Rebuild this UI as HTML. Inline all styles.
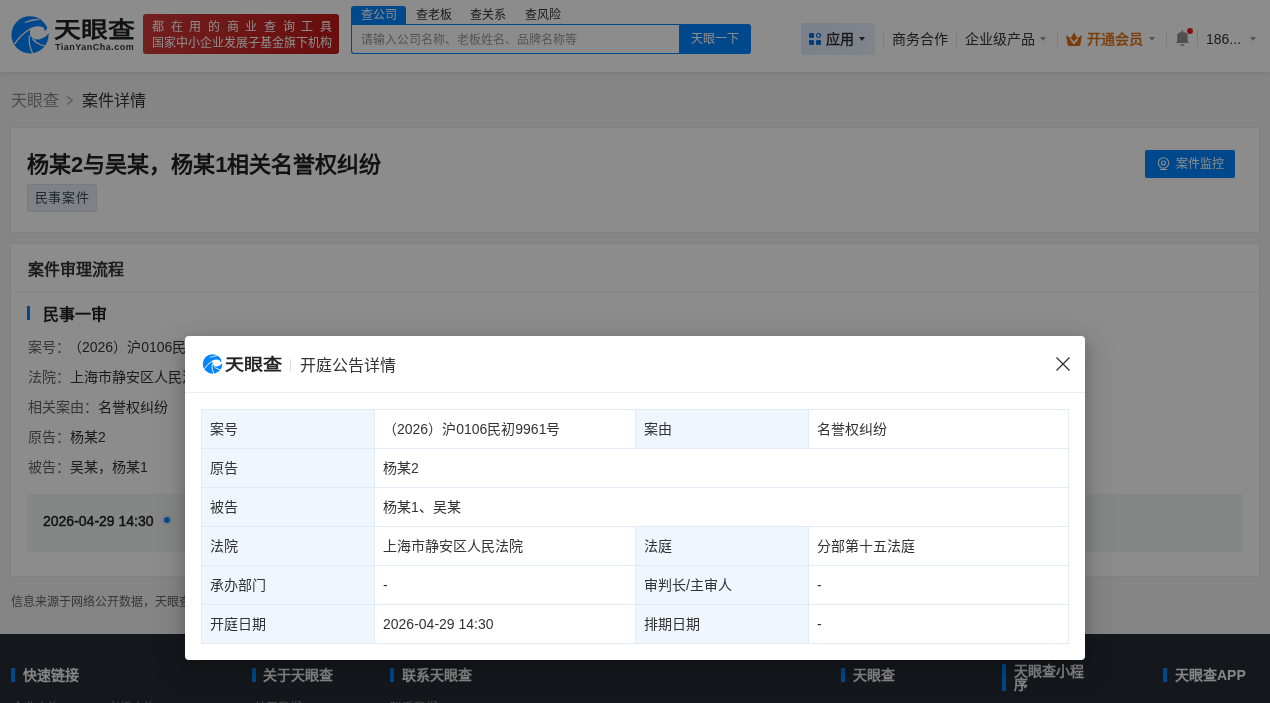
<!DOCTYPE html>
<html lang="zh-CN"><head><meta charset="utf-8">
<style>
*{box-sizing:border-box;margin:0;padding:0}
html,body{width:1270px;height:703px;overflow:hidden}
#page{position:absolute;left:0;top:0;width:1270px;height:703px;will-change:transform}
body{font-family:"Liberation Sans",sans-serif;color:#333;background:#f3f3f3;position:relative;font-size:14px}
.abs{position:absolute;white-space:nowrap}
#header{position:absolute;left:0;top:0;width:1270px;height:72px;background:#fff;box-shadow:0 2px 4px rgba(0,0,0,.08)}
.banner{position:absolute;left:143px;top:14px;width:196px;height:40px;border-radius:3px;background:linear-gradient(90deg,#d03a3a,#c01818);color:#fff;font-size:12px;line-height:16px}
.tab{position:absolute;top:6px;height:18px;font-size:12px;line-height:18px;color:#333}
.tab.on{background:#0084ff;color:#fff;border-radius:3px 3px 0 0;left:351px;width:55px;text-align:center}
.search{position:absolute;left:351px;top:24px;width:329px;height:30px;border:1px solid #0084ff;border-right:0;border-radius:0 0 0 3px;font-size:12px;color:#999;line-height:30px;padding-left:9px;background:#fff}
.sbtn{position:absolute;left:679px;top:24px;width:72px;height:30px;background:#0084ff;color:#fff;border-radius:0 3px 3px 0;font-size:12px;line-height:30px;text-align:center}
.nav{position:absolute;top:31px;font-size:14px;line-height:16px;color:#333}
.sep{position:absolute;top:31px;width:1px;height:16px;background:#e0e0e0}
.caret{position:absolute;width:0;height:0;border-left:3px solid transparent;border-right:3px solid transparent;border-top:4px solid #999}
.card{position:absolute;left:10px;width:1250px;background:#fff;border:1px solid #eaeaea}
.modal-wrap{position:absolute;left:0;top:0;width:1270px;height:703px;background:rgba(0,0,0,.45);will-change:transform}
.modal{position:absolute;left:185px;top:336px;width:900px;height:324px;background:#fff;border-radius:4px;box-shadow:0 3px 6px -4px rgba(0,0,0,.15),0 6px 16px 0 rgba(0,0,0,.22),0 9px 28px 8px rgba(0,0,0,.1);will-change:transform}
table{border-collapse:collapse;position:absolute;left:16px;top:73px;width:867px;table-layout:fixed}
td{border:1px solid #e1ebf7;height:39px;padding:0 8px;font-size:14px;color:#333;line-height:20px}
td.l{background:#eff6fd}
.foot{position:absolute;left:0;top:634px;width:1270px;height:69px;background:#262c33}
.fh{position:absolute;font-size:14px;font-weight:bold;color:#f2f2f2;line-height:14px}
.fb{position:absolute;width:4px;height:14px;background:#0084ff}
</style></head><body>
<div id="page">

<div id="header">
  <svg class="abs" style="left:10px;top:14px" width="40" height="40" viewBox="0 0 40 40">
    <circle cx="20" cy="20.8" r="18.6" fill="#0084ff"/>
    <path d="M20.5 14.2 Q27 10.5 33.5 13.6 Q34.8 15 34.4 17.3 Q36 16.5 37 14.5 L42 13 L42 19.5 L38.6 19.3 Q36 23.5 29 25.5 Q23 26 20.5 22 Q19.2 18 20.5 14.2 Z" fill="#fff"/>
    <path d="M4.5 30.2 Q10 21 21 14.2" stroke="#fff" stroke-width="1.3" fill="none"/>
    <path d="M19.4 21.5 Q18.6 26 19.9 31.9 Q21 36 22.8 39.6" stroke="#fff" stroke-width="1.2" fill="none"/>
    <path d="M22.5 25 Q26 29 30.7 30.7 Q33 31.6 35 31.9" stroke="#fff" stroke-width="1.2" fill="none"/>
    <path d="M14.8 8.5 Q21 5 29.6 5.3 Q21 6.9 14.8 8.5 Z" stroke="#fff" stroke-width="0.7" fill="#fff"/>
  </svg>
  <div class="abs" style="left:54px;top:19px;font-size:22px;line-height:22px;font-weight:bold;color:#222;transform:scaleX(1.22);transform-origin:0 0">天眼查</div>
  <div class="abs" style="left:55px;top:42px;font-size:9px;line-height:10px;font-weight:bold;color:#333;letter-spacing:0.5px">TianYanCha.com</div>
  <div class="banner">
    <div class="abs" style="left:9px;top:5px;width:180px;display:flex;justify-content:space-between"><span>都</span><span>在</span><span>用</span><span>的</span><span>商</span><span>业</span><span>查</span><span>询</span><span>工</span><span>具</span></div>
    <div class="abs" style="left:9px;top:21px">国家中小企业发展子基金旗下机构</div>
  </div>
  <div class="tab on">查公司</div>
  <div class="tab" style="left:416px">查老板</div>
  <div class="tab" style="left:470px">查关系</div>
  <div class="tab" style="left:525px">查风险</div>
  <div class="search">请输入公司名称、老板姓名、品牌名称等</div>
  <div class="sbtn">天眼一下</div>

  <div class="abs" style="left:801px;top:23px;width:74px;height:32px;background:linear-gradient(120deg,#deeafd,#eaf2fd);border-radius:3px"></div>
  <svg class="abs" style="left:809px;top:33px" width="12" height="12" viewBox="0 0 12 12">
    <rect x="0" y="0" width="5" height="5" rx="1" fill="#0a6fdc"/>
    <circle cx="9.5" cy="2.5" r="2" stroke="#0a6fdc" stroke-width="1.2" fill="none"/>
    <rect x="0" y="7" width="5" height="5" rx="1" fill="#0a6fdc"/>
    <rect x="7" y="7" width="5" height="5" rx="1" fill="#0a6fdc"/>
  </svg>
  <div class="nav" style="left:826px;-webkit-text-stroke:0.35px #333;color:#222">应用</div>
  <div class="caret" style="left:859px;top:37px;border-top-color:#333"></div>
  <div class="sep" style="left:883px"></div>
  <div class="nav" style="left:892px">商务合作</div>
  <div class="sep" style="left:956px"></div>
  <div class="nav" style="left:965px">企业级产品</div>
  <div class="caret" style="left:1040px;top:37px"></div>
  <div class="sep" style="left:1057px"></div>
  <svg class="abs" style="left:1066px;top:32px" width="16" height="15" viewBox="0 0 16 15">
    <path d="M0 3 L4.6 6.2 L8 0.4 L11.4 6.2 L16 3 L14.3 13 Q14.1 14 13 14 L3 14 Q1.9 14 1.7 13 Z" fill="#e0700f"/>
    <path d="M4.4 6.8 L7.9 11.2 L11.6 6.8" stroke="#fff" stroke-width="1.8" fill="none"/>
  </svg>
  <div class="nav" style="left:1087px;color:#e0700f;-webkit-text-stroke:0.4px #e0700f">开通会员</div>
  <div class="caret" style="left:1149px;top:37px"></div>
  <div class="sep" style="left:1166px"></div>
  <svg class="abs" style="left:1175px;top:30px" width="16" height="16" viewBox="0 0 16 16">
    <rect x="6.7" y="0" width="1.4" height="2.5" rx="0.7" fill="#929294"/>
    <path d="M2.2 12 L2.2 5.5 Q2.2 2 7.4 2 Q12.7 2 12.7 5.5 L12.7 12 Z" fill="#929294"/>
    <path d="M0.6 13 L2.2 11.4 L12.7 11.4 L14 13 Z" fill="#929294"/>
    <rect x="5.4" y="14.2" width="3.9" height="1.5" fill="#929294"/>
  </svg>
  <div class="abs" style="left:1187px;top:28px;width:6px;height:6px;border-radius:50%;background:#f02020"></div>
  <div class="sep" style="left:1197px"></div>
  <div class="nav" style="left:1206px">186...</div>
  <div class="caret" style="left:1250px;top:37px"></div>
</div>

<div class="abs" style="left:11px;top:91px;font-size:16px;line-height:20px;color:#8c8c8c">天眼查</div>
<svg class="abs" style="left:66px;top:96px" width="8" height="9" viewBox="0 0 8 9"><path d="M1 0.5 L6.5 4.5 L1 8.5" stroke="#999" stroke-width="1.1" fill="none"/></svg>
<div class="abs" style="left:82px;top:91px;font-size:16px;line-height:20px;color:#333">案件详情</div>

<div class="card" style="top:127px;height:106px">
  <div class="abs" style="left:16px;top:23px;font-size:22px;line-height:28px;font-weight:bold;color:#222">杨某2与吴某，杨某1相关名誉权纠纷</div>
  <div class="abs" style="left:16px;top:56px;width:70px;height:28px;background:#e6ecf4;border:1px solid #d8e0ea;border-radius:3px;font-size:13px;line-height:26px;color:#3c4a5a;text-align:center;letter-spacing:0.6px">民事案件</div>
  <div class="abs" style="left:1134px;top:22px;width:90px;height:28px;background:#0084ff;border-radius:2px;color:#fff;font-size:12px;line-height:28px">
    <svg class="abs" style="left:12px;top:7px" width="13" height="14" viewBox="0 0 13 14"><circle cx="6.5" cy="6" r="5.2" stroke="#fff" stroke-width="1.1" fill="none"/><circle cx="6.5" cy="6" r="2" stroke="#fff" stroke-width="1.1" fill="none"/><path d="M3 12.5 L10 12.5" stroke="#fff" stroke-width="1.1"/></svg>
    <span class="abs" style="left:31px;top:0">案件监控</span>
  </div>
</div>

<div class="card" style="top:243px;height:334px">
  <div class="abs" style="left:17px;top:16px;font-size:16px;line-height:20px;font-weight:bold;color:#333">案件审理流程</div>
  <div class="abs" style="left:0;top:48px;width:1248px;height:1px;background:#eee"></div>
  <div class="abs" style="left:16px;top:62px;width:3px;height:14px;background:#0084ff"></div>
  <div class="abs" style="left:32px;top:61px;font-size:16px;line-height:20px;font-weight:bold;color:#222">民事一审</div>
  <div class="abs" style="left:17px;top:93px;font-size:14px;line-height:20px;color:#333"><span style="color:#666">案号：</span><span style="margin-left:5px">（2026）</span>沪0106民初9961号</div>
  <div class="abs" style="left:17px;top:123px;font-size:14px;line-height:20px;color:#333"><span style="color:#666">法院：</span>上海市静安区人民法院</div>
  <div class="abs" style="left:17px;top:153px;font-size:14px;line-height:20px;color:#333"><span style="color:#666">相关案由：</span>名誉权纠纷</div>
  <div class="abs" style="left:17px;top:183px;font-size:14px;line-height:20px;color:#333"><span style="color:#666">原告：</span>杨某2</div>
  <div class="abs" style="left:17px;top:213px;font-size:14px;line-height:20px;color:#333"><span style="color:#666">被告：</span>吴某，杨某1</div>
  <div class="abs" style="left:16px;top:250px;width:1216px;height:58px;background:#f2f4f4">
    <div class="abs" style="left:16px;top:19px;font-size:14px;line-height:16px;-webkit-text-stroke:0.45px #222;color:#222">2026-04-29 14:30</div>
    <div class="abs" style="left:137px;top:23px;width:6px;height:6px;border-radius:50%;background:#0084ff"></div><div class="abs" style="left:135px;top:21px;width:10px;height:10px;border-radius:50%;border:1px solid rgba(0,132,255,.17)"></div>
  </div>
</div>

<div class="abs" style="left:11px;top:594px;font-size:12px;line-height:16px;color:#666">信息来源于网络公开数据，天眼查不对数据真实性做任何承诺</div>

<div class="foot">
  <div class="abs" style="left:12px;top:67px;font-size:12px;line-height:14px;color:#888">企业查询</div><div class="abs" style="left:108px;top:67px;font-size:12px;line-height:14px;color:#888">老板查询</div><div class="abs" style="left:254px;top:67px;font-size:12px;line-height:14px;color:#888">关于我们</div><div class="abs" style="left:390px;top:67px;font-size:12px;line-height:14px;color:#888">联系我们</div>
  <div class="fb" style="left:11px;top:34px"></div><div class="fh" style="left:23px;top:34px">快速链接</div>
  <div class="fb" style="left:252px;top:34px"></div><div class="fh" style="left:263px;top:34px">关于天眼查</div>
  <div class="fb" style="left:390px;top:34px"></div><div class="fh" style="left:402px;top:34px">联系天眼查</div>
  <div class="fb" style="left:841px;top:34px"></div><div class="fh" style="left:853px;top:34px">天眼查</div>
  <div class="fb" style="left:1002px;top:30px;height:27px"></div><div class="fh" style="left:1014px;top:31px;width:72px;white-space:normal;line-height:13px">天眼查小程序</div>
  <div class="fb" style="left:1163px;top:34px"></div><div class="fh" style="left:1175px;top:34px">天眼查APP</div>
</div>

</div>
<div class="modal-wrap">
  <div class="modal">
    <svg class="abs" style="left:17px;top:17px" width="21" height="21" viewBox="0 0 40 40">
    <circle cx="20" cy="20.8" r="18.6" fill="#0084ff"/>
    <path d="M20.5 14.2 Q27 10.5 33.5 13.6 Q34.8 15 34.4 17.3 Q36 16.5 37 14.5 L42 13 L42 19.5 L38.6 19.3 Q36 23.5 29 25.5 Q23 26 20.5 22 Q19.2 18 20.5 14.2 Z" fill="#fff"/>
    <path d="M4.5 30.2 Q10 21 21 14.2" stroke="#fff" stroke-width="1.8" fill="none"/>
    <path d="M19.4 21.5 Q18.6 26 19.9 31.9 Q21 36 22.8 39.6" stroke="#fff" stroke-width="1.7" fill="none"/>
    <path d="M22.5 25 Q26 29 30.7 30.7 Q33 31.6 35 31.9" stroke="#fff" stroke-width="1.7" fill="none"/>
    <path d="M14.8 8.5 Q21 5 29.6 5.3 Q21 6.9 14.8 8.5 Z" stroke="#fff" stroke-width="0.7" fill="#fff"/>
    </svg>
    <div class="abs" style="left:40px;top:21px;font-size:16px;line-height:16px;-webkit-text-stroke:0.6px #222;color:#222;transform:scaleX(1.19);transform-origin:0 0">天眼查</div>
    <div class="abs" style="left:105px;top:23px;width:1px;height:12px;background:#ddd"></div>
    <div class="abs" style="left:115px;top:20px;font-size:16px;line-height:20px;color:#333">开庭公告详情</div>
    <svg class="abs" style="left:871px;top:21px" width="14" height="14" viewBox="0 0 14 14"><path d="M0.5 0.5 L13.5 13.5 M13.5 0.5 L0.5 13.5" stroke="#333" stroke-width="1.3"/></svg>
    <div class="abs" style="left:0;top:56px;width:900px;height:1px;background:#eee"></div>
    <table>
      <colgroup><col style="width:173px"><col style="width:261px"><col style="width:173px"><col style="width:260px"></colgroup>
      <tr><td class="l">案号</td><td>（2026）沪0106民初9961号</td><td class="l">案由</td><td>名誉权纠纷</td></tr>
      <tr><td class="l">原告</td><td colspan="3">杨某2</td></tr>
      <tr><td class="l">被告</td><td colspan="3">杨某1、吴某</td></tr>
      <tr><td class="l">法院</td><td>上海市静安区人民法院</td><td class="l">法庭</td><td>分部第十五法庭</td></tr>
      <tr><td class="l">承办部门</td><td>-</td><td class="l">审判长/主审人</td><td>-</td></tr>
      <tr><td class="l">开庭日期</td><td>2026-04-29 14:30</td><td class="l">排期日期</td><td>-</td></tr>
    </table>
  </div>
</div>
</body></html>
